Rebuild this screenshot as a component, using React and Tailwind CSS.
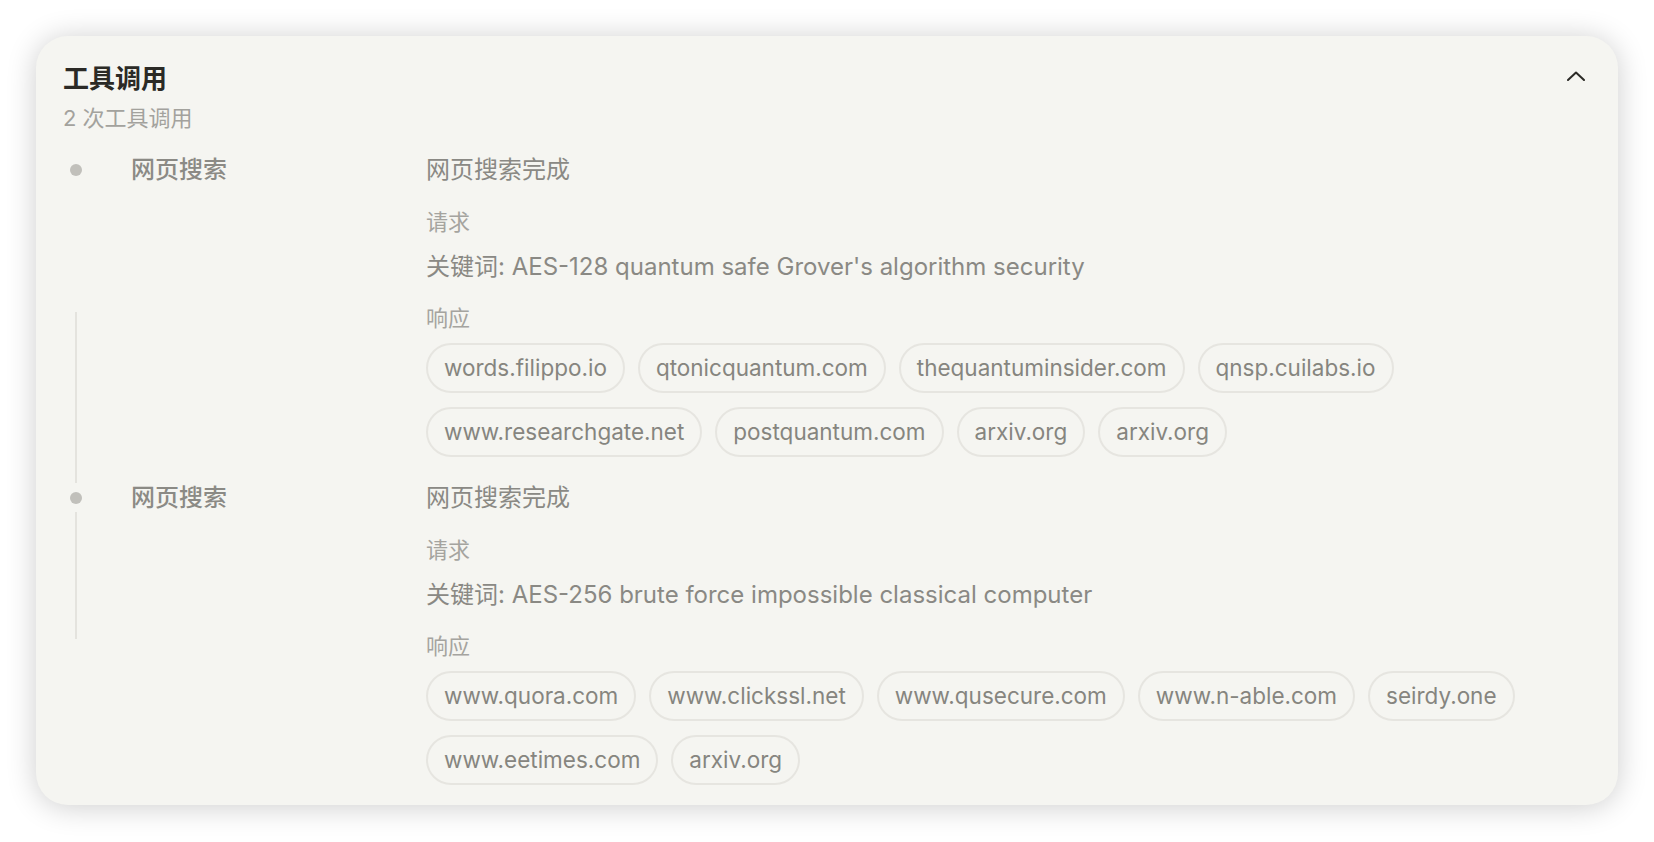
import React from "react";

const calls = [
    {
        name: "网页搜索",
        status: "网页搜索完成",
        query: "关键词: AES-128 quantum safe Grover's algorithm security",
        sites: [
            "words.filippo.io",
            "qtonicquantum.com",
            "thequantuminsider.com",
            "qnsp.cuilabs.io",
            "www.researchgate.net",
            "postquantum.com",
            "arxiv.org",
            "arxiv.org",
        ],
        line: "top-[158px] h-[171px]",
    },
    {
        name: "网页搜索",
        status: "网页搜索完成",
        query: "关键词: AES-256 brute force impossible classical computer",
        sites: [
            "www.quora.com",
            "www.clickssl.net",
            "www.qusecure.com",
            "www.n-able.com",
            "seirdy.one",
            "www.eetimes.com",
            "arxiv.org",
        ],
        line: "top-[30px] h-[127px]",
    },
];

function ToolCall({ call, first }) {
    return (
        <div className={`relative flex ${first ? "mt-[21px]" : "mt-[25px]"}`}>
            {/* timeline connector */}
            <div className={`absolute left-[12px] w-[2px] bg-[#e4e3de] ${call.line}`} />

            <div className="flex w-[363px] shrink-0 items-start">
                <div className="flex h-[32px] w-[68px] items-center pl-[7px]">
                    <div className="h-[12px] w-[12px] rounded-full bg-[#c1c0bb]" />
                </div>
                <div className="text-[24px] leading-[32px] font-medium text-[#8b8a85]">{call.name}</div>
            </div>

            <div className="flex min-w-0 flex-1 flex-col">
                <div className="text-[24px] leading-[32px] text-[#8a8984]">{call.status}</div>
                <div className="mt-[21px] text-[22px] leading-[30px] text-[#a5a49f]">请求</div>
                <div className="mt-[14px] text-[24px] leading-[32px] text-[#8a8984]">{call.query}</div>
                <div className="mt-[20px] text-[22px] leading-[30px] text-[#a5a49f]">响应</div>
                <div className="mt-[10px] flex flex-wrap gap-x-[13px] gap-y-[14px]">
                    {call.sites.map((site, index) => (
                        <div
                            key={index}
                            className="rounded-full border-2 border-[#e6e5e0] px-[16px] py-[7px] text-[22.5px] leading-[32px] text-[#86857f]"
                        >
                            {site}
                        </div>
                    ))}
                </div>
            </div>
        </div>
    );
}

export default function App() {
    return (
        <div
            className="min-h-screen bg-white p-[36px]"
            style={{ fontFamily: "Inter, 'Noto Sans CJK SC', sans-serif" }}
        >
            <div className="rounded-[32px] bg-[#f5f5f1] px-[27px] pt-[25px] pb-[20px] shadow-[0_2px_30px_rgba(0,0,0,0.2)]">
                <div className="flex items-start justify-between">
                    <div>
                        <div className="text-[26px] leading-[36px] font-semibold text-[#2b2a26]">工具调用</div>
                        <div className="mt-[6px] text-[22px] leading-[30px] text-[#a3a29d]">2 次工具调用</div>
                    </div>
                    <svg className="mt-[10px] mr-[6px]" width="18" height="10" viewBox="0 0 18 10" fill="none">
                        <polyline points="1,9 9,1.5 17,9" stroke="#2b2a26" strokeWidth="2" strokeLinecap="round" strokeLinejoin="round" />
                    </svg>
                </div>

                {calls.map((call, index) => (
                    <ToolCall key={index} call={call} first={index === 0} />
                ))}
            </div>
        </div>
    );
}
